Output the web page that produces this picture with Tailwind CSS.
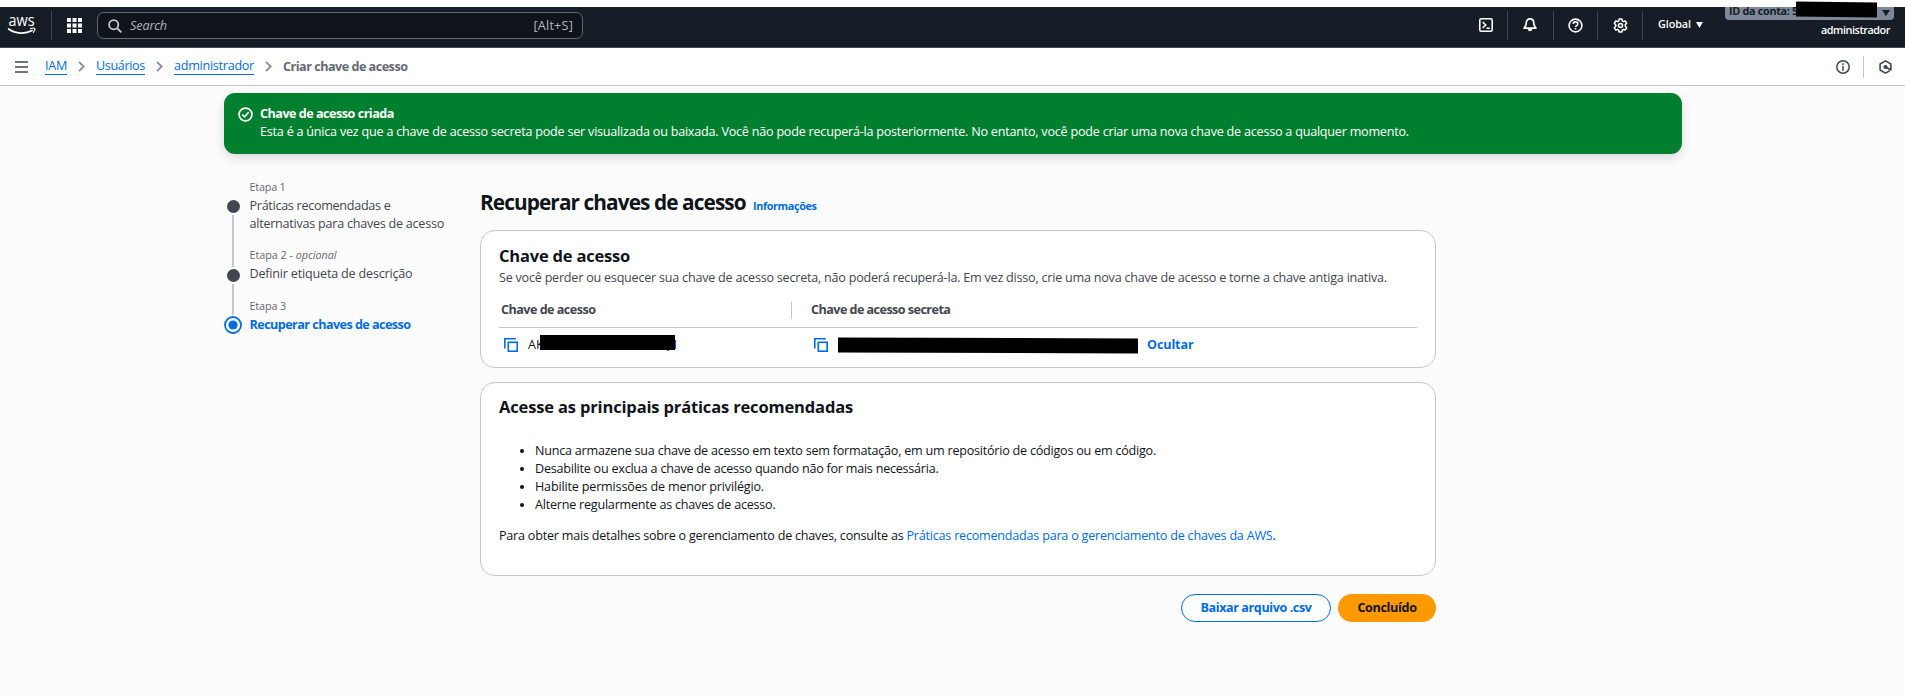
<!DOCTYPE html>
<html lang="pt-BR"><head><meta charset="utf-8"><title>Criar chave de acesso | IAM</title>
<script src="https://cdn.jsdelivr.net/npm/@tailwindcss/browser@4"></script></head>
<body class="w-[1905px] h-[697px] overflow-hidden bg-[#fcfcfd] font-['Open_Sans','Noto_Sans',sans-serif] text-[12.6px] leading-[18px] text-[#0f141a] whitespace-nowrap">
<div class="h-[7px] bg-white"></div>
<header class="flex h-[41px] items-start border-b border-[#424650] bg-[#161d26] text-white">
  <svg class="mt-[8px] ml-[8px] h-[20px] w-[29px] overflow-visible" viewBox="0 0 29 20" fill="none"><text x=".5" y="11" fill="#fff" font-size="15.500" font-weight="500" textLength="26" lengthAdjust="spacingAndGlyphs">aws</text><path d="M.6 14c7 5.200 17 5.200 23.500 1.600" stroke="#fff" stroke-width="1.700" stroke-linecap="round"/><path d="M22.600 13.600c1.500-.5 3.800-.6 4.200 0 .3.700-.2 2.700-1.400 3.700" stroke="#fff" stroke-width="1.200" stroke-linecap="round"/></svg>
  <div class="mt-[4px] ml-[14px] h-[29px] w-px bg-[#424650]"></div>
  <svg class="mt-[11px] ml-[15px] h-[15px] w-[15px]" viewBox="0 0 15 15" fill="#fff"><path d="M0 0h4v4H0zM5.500 0h4v4h-4zM11 0h4v4h-4zM0 5.500h4v4H0zM5.500 5.500h4v4h-4zM11 5.500h4v4h-4zM0 11h4v4H0zM5.500 11h4v4h-4zM11 11h4v4h-4z"/></svg>
  <div class="mt-[5px] ml-[15px] flex h-[27px] w-[486px] items-center rounded-[7px] border border-[#656871] bg-[#0f141a] pl-[10px] pr-[9px] text-[#b4b4bb]">
    <svg class="h-[14px] w-[14px]" viewBox="0 0 14 14" fill="none" stroke="#c6c6cd" stroke-width="1.800"><circle cx="5.700" cy="5.700" r="4.600"/><path d="M9 9l4.300 4.300"/></svg>
    <span class="ml-[8px] tracking-[-0.115px] italic">Search</span><span class="ml-auto tracking-[0.217px]">[Alt+S]</span>
  </div>
  <div class="ml-auto flex items-start">
    <svg class="mt-[11px] h-[14px] w-[14px]" viewBox="0 0 14 14" fill="none" stroke="#fff" stroke-width="1.600"><rect x=".8" y=".8" width="12.400" height="12.400" rx="1.500"/><path d="M3.700 4l3 3-3 3M7.500 10.300h3.300"/></svg>
    <div class="mt-[4px] ml-[14px] h-[29px] w-px bg-[#424650]"></div>
    <svg class="mt-[11px] ml-[15px] h-[14px] w-[14px]" viewBox="0 0 14 14" fill="none" stroke="#fff" stroke-width="1.700" stroke-linejoin="round"><path d="M7 .9c-2.300 0-3.700 1.700-3.700 3.800 0 2.600-.7 3.700-2.200 5.500h11.800c-1.500-1.800-2.200-2.900-2.200-5.500C10.700 2.600 9.300.9 7 .9z"/><path d="M4.600 10.600c.1 1.700 1 2.600 2.400 2.600s2.300-.9 2.400-2.600z" fill="#fff" stroke="none"/></svg>
    <div class="mt-[4px] ml-[16px] h-[29px] w-px bg-[#424650]"></div>
    <svg class="mt-[11px] ml-[14px] h-[15px] w-[15px]" viewBox="0 0 15 15" fill="none" stroke="#fff" stroke-width="1.600"><circle cx="7.500" cy="7.500" r="6.400"/><path d="M5.200 6.100c0-1.400 1-2.200 2.300-2.200s2.300.8 2.300 2c0 1.700-2.300 1.600-2.300 3.200M7.500 10v1.600"/></svg>
    <div class="mt-[4px] ml-[14px] h-[29px] w-px bg-[#424650]"></div>
    <svg class="mt-[11px] ml-[15px] h-[15px] w-[15px]" viewBox="0 0 15 15" fill="none" stroke="#fff" stroke-width="1.600" stroke-linejoin="round"><path d="M6.200 1h2.600l.5 1.900 1.200.7 1.900-.5 1.300 2.200-1.400 1.400v1.600l1.400 1.400-1.300 2.200-1.900-.5-1.200.7-.5 1.900H6.200l-.5-1.900-1.200-.7-1.900.5L1.300 9.700l1.400-1.400V6.700L1.300 5.300l1.300-2.200 1.900.5 1.200-.7z"/><circle cx="7.500" cy="7.500" r="2"/></svg>
    <div class="mt-[4px] ml-[14px] h-[29px] w-px bg-[#424650]"></div>
    <span class="mt-[8px] ml-[15px] w-[33px] text-[10.8px] font-semibold tracking-[-0.073px]">Global</span>
    <svg class="mt-[15px] ml-[5px] h-[6px] w-[7px]" viewBox="0 0 7 6" fill="#fff"><path d="M0 0h7L3.500 6z"/></svg>
    <div class="mr-[11px] ml-[22px] w-[169px]">
      <div class="relative flex h-[13px] items-start rounded-b-[4px] bg-[#7d8998] pl-[4px] text-[10.8px] font-bold text-[#161d26]">
        <span class="-mt-[5px] tracking-[-0.296px]">ID da conta: 5</span>
        <svg class="mt-[3px] mr-[4px] ml-auto h-[6px] w-[8px]" viewBox="0 0 8 6" fill="#161d26"><path d="M0 0h8L4 6z"/></svg>
        <div class="absolute -top-[5.500px] left-[71px] h-[15px] w-[81px] rotate-[.7deg] bg-black"></div>
      </div>
      <div class="mt-[1px] flex justify-end pr-[4px] text-[10.8px] font-semibold tracking-[-0.43px]"><span>administrador</span></div>
    </div>
  </div>
</header>
<nav class="flex h-[38px] items-center border-b border-[#c6c6cd] bg-white pl-[15px] text-[#006ce0]">
  <svg class="h-[12px] w-[13px]" viewBox="0 0 13 12" stroke="#424650" stroke-width="1.700"><path d="M0 1h13M0 6h13M0 11h13"/></svg>
  <a class="ml-[17px] border-b border-[#006ce0] leading-[16px] tracking-[-0.271px]">IAM</a>
  <svg class="mx-[11px] h-[11px] w-[7px]" viewBox="0 0 7 11" fill="none" stroke="#8c8c94" stroke-width="1.800"><path d="M1 .8l4.700 4.700L1 10.200"/></svg>
  <a class="border-b border-[#006ce0] leading-[16px] tracking-[-0.352px]">Usuários</a>
  <svg class="mx-[11px] h-[11px] w-[7px]" viewBox="0 0 7 11" fill="none" stroke="#8c8c94" stroke-width="1.800"><path d="M1 .8l4.700 4.700L1 10.200"/></svg>
  <a class="border-b border-[#006ce0] leading-[16px] tracking-[-0.27px]">administrador</a>
  <svg class="mx-[11px] h-[11px] w-[7px]" viewBox="0 0 7 11" fill="none" stroke="#8c8c94" stroke-width="1.800"><path d="M1 .8l4.700 4.700L1 10.200"/></svg>
  <span class="font-bold tracking-[-0.5px] text-[#656871]">Criar chave de acesso</span>
  <svg class="ml-auto h-[14px] w-[14px]" viewBox="0 0 14 14" fill="none" stroke="#424650" stroke-width="1.500"><circle cx="7" cy="7" r="6.200"/><path d="M7 3.300v1.600M7 6v4.700"/></svg>
  <div class="ml-[13px] h-[22px] w-px bg-[#c6c6cd]"></div>
  <svg class="mr-[13px] ml-[15px] h-[14px] w-[13px]" viewBox="0 0 13 14" fill="none" stroke="#424650" stroke-width="1.600" stroke-linejoin="round"><path d="M9 11.700l-2.500 1.400L1.100 10V4L6.500.9 11.900 4v6L6.500 7"/><path d="M9 11.700l1.600-1"/><circle cx="6.500" cy="7" r="1.300" fill="#424650"/></svg>
</nav>
<section class="mt-[7px] ml-[224px] flex h-[61px] w-[1458px] rounded-[11px] bg-[#00802f] pt-[12px] pl-[14px] text-white shadow-[0_4px_12px_rgba(0,7,22,0.14)]">
  <svg class="mt-[2px] h-[15px] w-[15px]" viewBox="0 0 15 15" fill="none" stroke="#fff" stroke-width="1.700"><circle cx="7.500" cy="7.500" r="6.400"/><path d="M4.300 7.600l2.300 2.200 4-4.600"/></svg>
  <div class="ml-[7px]"><div class="font-bold tracking-[-0.495px]">Chave de acesso criada</div><div class="font-medium tracking-[-0.226px]">Esta é a única vez que a chave de acesso secreta pode ser visualizada ou baixada. Você não pode recuperá-la posteriormente. No entanto, você pode criar uma nova chave de acesso a qualquer momento.</div></div>
</section>
<main class="flex pl-[224px]">
  <ol class="mt-[24px] w-[256px] text-[#424650]">
    <li class="flex h-[68px]">
      <div class="flex w-[18px] flex-col items-center pt-[22px]"><div class="h-[13px] w-[13px] shrink-0 rounded-full bg-[#424650]"></div><div class="mt-[2px] -mb-[21px] w-[2px] flex-1 bg-[#c6c6cd]"></div></div>
      <div class="ml-[7.500px]"><div class="mb-px text-[10.8px] tracking-[-0.205px] text-[#656871]">Etapa 1</div><div class="tracking-[-0.293px]">Práticas recomendadas e</div><div class="tracking-[-0.252px]">alternativas para chaves de acesso</div></div>
    </li>
    <li class="flex h-[51px]">
      <div class="flex w-[18px] flex-col items-center pt-[23px]"><div class="h-[13px] w-[13px] shrink-0 rounded-full bg-[#424650]"></div><div class="mt-[2px] -mb-[18px] w-[2px] flex-1 bg-[#c6c6cd]"></div></div>
      <div class="ml-[7.500px]"><div class="mb-px text-[10.8px] tracking-[-0.033px] text-[#656871]">Etapa 2 - <i>opcional</i></div><div class="tracking-[-0.198px]">Definir etiqueta de descrição</div></div>
    </li>
    <li class="flex">
      <div class="flex w-[18px] pt-[19px]"><svg class="h-[18px] w-[18px]" viewBox="0 0 18 18"><circle cx="9" cy="9" r="8" fill="#fff" stroke="#006ce0" stroke-width="1.800"/><circle cx="9" cy="9" r="4.600" fill="#006ce0"/></svg></div>
      <div class="ml-[7.500px]"><div class="mb-px text-[10.8px] tracking-[-0.131px] text-[#656871]">Etapa 3</div><div class="font-bold tracking-[-0.55px] text-[#006ce0]">Recuperar chaves de acesso</div></div>
    </li>
  </ol>
  <div class="w-[956px]">
    <div class="mt-[34px] flex h-[42px] items-baseline"><h1 class="w-[265px] text-[20.8px] leading-[28px] font-bold tracking-[-0.91px]">Recuperar chaves de acesso</h1><a class="ml-[8px] text-[10.8px] font-bold tracking-[-0.37px] text-[#006ce0]">Informações</a></div>
    <section class="h-[138px] rounded-[15px] border border-[#c6c6cd] bg-white px-[18px] pt-[13px]">
      <h2 class="text-[16.5px] leading-[23px] font-bold tracking-[-0.2px]">Chave de acesso</h2>
      <p class="mt-[2px] tracking-[-0.231px] text-[#424650]">Se você perder ou esquecer sua chave de acesso secreta, não poderá recuperá-la. Em vez disso, crie uma nova chave de acesso e torne a chave antiga inativa.</p>
      <div class="mt-[13px] flex h-[28px] border-b border-[#c6c6cd] pl-[2px] font-bold text-[#424650]"><div class="mt-px w-[290px] tracking-[-0.52px]">Chave de acesso</div><div class="mt-[2px] h-[17px] w-px bg-[#c6c6cd]"></div><span class="mt-px ml-[19px] tracking-[-0.548px]">Chave de acesso secreta</span></div>
      <div class="mt-[7px] flex h-[18px] items-center">
        <div class="relative flex w-[310px] items-center pl-[5px]">
          <svg class="mt-[2px] h-[14px] w-[14px]" viewBox="0 0 14 14" fill="none" stroke="#006ce0" stroke-width="1.600"><path d="M.8 10.500V.8h11"/><rect x="4.300" y="4.300" width="8.900" height="8.900"/></svg>
          <span class="mt-[2px] ml-[10px]">AK</span><span class="mt-[2px] ml-[117px]">Q</span><span class="mt-[2px] ml-[3px]">I</span>
          <div class="absolute top-px left-[41px] h-[15px] w-[135px] bg-black"></div>
        </div>
        <svg class="mt-[2px] ml-[5px] h-[14px] w-[14px]" viewBox="0 0 14 14" fill="none" stroke="#006ce0" stroke-width="1.600"><path d="M.8 10.500V.8h11"/><rect x="4.300" y="4.300" width="8.900" height="8.900"/></svg>
        <div class="mt-[3px] ml-[10px] h-[15px] w-[300px] rotate-[.2deg] bg-black"></div>
        <a class="mt-[2px] ml-[9px] font-bold tracking-[-0.132px] text-[#006ce0]">Ocultar</a>
      </div>
    </section>
    <section class="mt-[14px] h-[194px] rounded-[15px] border border-[#c6c6cd] bg-white px-[18px] pt-[13px]">
      <h2 class="text-[16.5px] leading-[21px] font-bold tracking-[-0.155px]">Acesse as principais práticas recomendadas</h2>
      <ul class="mt-[25px] list-disc pl-[36px]">
        <li class="tracking-[-0.233px]">Nunca armazene sua chave de acesso em texto sem formatação, em um repositório de códigos ou em código.</li>
        <li class="tracking-[-0.243px]">Desabilite ou exclua a chave de acesso quando não for mais necessária.</li>
        <li class="tracking-[-0.18px]">Habilite permissões de menor privilégio.</li>
        <li class="tracking-[-0.232px]">Alterne regularmente as chaves de acesso.</li>
      </ul>
      <p class="mt-[13px] tracking-[-0.227px]">Para obter mais detalhes sobre o gerenciamento de chaves, consulte as <a class="text-[#006ce0]">Práticas recomendadas para o gerenciamento de chaves da AWS</a>.</p>
    </section>
    <div class="mt-[18px] flex justify-end gap-[7px] font-bold">
      <button class="h-[28px] w-[150px] rounded-full border-[1.500px] border-[#006ce0] bg-white tracking-[-0.42px] text-[#006ce0]">Baixar arquivo .csv</button>
      <button class="h-[28px] w-[98px] rounded-full bg-[#ff9900] tracking-[-0.35px]">Concluído</button>
    </div>
  </div>
</main>
</body></html>
